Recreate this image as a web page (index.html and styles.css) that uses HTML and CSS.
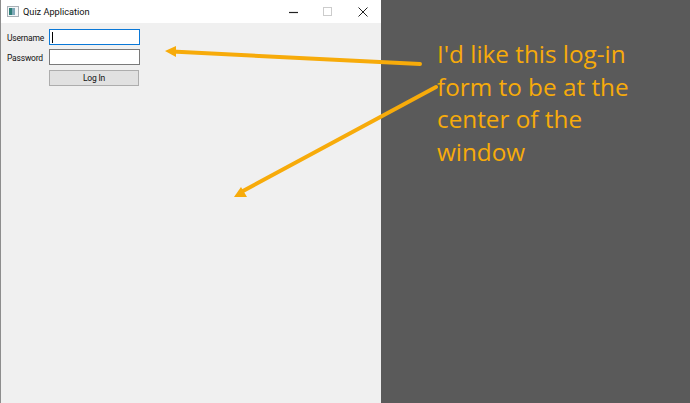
FILE: index.html
```html
<!DOCTYPE html>
<html lang="en">
<head>
<meta charset="utf-8">
<title>Quiz Application</title>
<link rel="stylesheet" href="styles.css">
</head>
<body>
<div class="stage">
  <section class="window">
    <header class="titlebar">
      <svg class="app-icon" width="13" height="13" viewBox="0 0 13 13">
        <rect x="0.5" y="1.5" width="11" height="10" fill="#f4f6f8" stroke="#a9b0b6"/>
        <rect x="2" y="3" width="3" height="7" fill="#2f7f78"/>
        <rect x="5" y="3" width="3" height="7" fill="#7fa8b8"/>
      </svg>
      <span class="title">Quiz Application</span>
      <div class="controls">
        <span class="ctl"><svg width="12" height="12" viewBox="0 0 12 12"><path d="M1 6.500H10" stroke="#222" stroke-width="1.200"/></svg></span>
        <span class="ctl"><svg width="12" height="12" viewBox="0 0 12 12"><rect x="1.500" y="1.500" width="8" height="8" fill="none" stroke="#ccc"/></svg></span>
        <span class="ctl ctl-close"><svg width="12" height="12" viewBox="0 0 12 12"><path d="M1.500 1.500L10.500 10.500M10.500 1.500L1.500 10.500" stroke="#222" stroke-width="1"/></svg></span>
      </div>
    </header>
    <form class="form">
      <label class="lbl">Username</label>
      <div class="field focus"><i class="caret"></i></div>
      <label class="lbl">Password</label>
      <div class="field"></div>
      <span></span>
      <div class="btn">Log In</div>
    </form>
  </section>
  <aside class="note">I'd like this log-in form to be at the center of the window</aside>
</div>
<svg class="arrows" width="690" height="403" viewBox="0 0 690 403">
  <path d="M420 64L172 51.500" stroke="#f7ab0a" stroke-width="4" stroke-linecap="round"/>
  <path d="M165 51L176 46V57Z" fill="#f7ab0a"/>
  <path d="M436 87L243 191" stroke="#f7ab0a" stroke-width="4" stroke-linecap="round"/>
  <path d="M234 197L241 187L247 197Z" fill="#f7ab0a"/>
</svg>
</body>
</html>
```
FILE: styles.css
```css
* { box-sizing: border-box; }
html, body { margin: 0; padding: 0; }
body { width: 690px; height: 403px; overflow: hidden; background: #5a5a5a; position: relative; }
.stage { display: flex; width: 690px; height: 403px; }
.window { width: 381px; height: 403px; background: #f0f0f0; border-left: 1px solid #8d8d8d; flex: none; }
.titlebar { height: 23px; background: #fff; display: flex; align-items: center; padding-left: 6px; font: 9.200px Roboto, sans-serif; color: #111; }
.app-icon { flex: none; width: 13px; height: 13px; margin-right: 3px; }
.title { flex: 1; }
.controls { display: flex; }
.ctl { width: 34px; height: 23px; display: flex; align-items: center; justify-content: center; }
.ctl-close { width: 36px; }
.form { display: grid; grid-template-columns: 42px 91px; row-gap: 4px; padding: 6px 0 0 6px; font: 8.500px Roboto, sans-serif; letter-spacing: -0.2px; color: #111; align-items: center; }
.lbl { line-height: 14px; padding-top: 2px; }
.field { height: 16px; width: 91px; background: #fff; border: 1px solid #7a7a7a; display: flex; align-items: center; padding-left: 2px; }
.field.focus { border-color: #0a78d7; }
.caret { width: 1px; height: 11px; background: #000; }
.btn { height: 16px; width: 90px; margin-top: 1px; background: #e1e1e1; border: 1px solid #adadad; text-align: center; line-height: 14px; }
.note { margin: 38px 0 0 56px; width: 215px; font: 24.300px/32.500px "Open Sans", sans-serif; color: #f7ab0a; }
.arrows { position: absolute; left: 0; top: 0; }
```
